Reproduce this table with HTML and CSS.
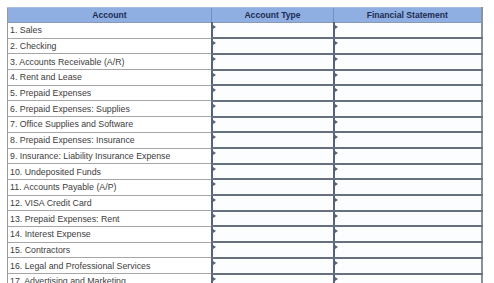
FILE: index.html
```html
<!DOCTYPE html>
<html>
<head>
<meta charset="utf-8">
<link rel="stylesheet" href="styles.css">
</head>
<body>
<table class="sheet">
  <colgroup>
    <col class="c-acc">
    <col class="c-type">
    <col class="c-fs">
  </colgroup>
  <thead>
    <tr><th>Account</th><th>Account Type</th><th>Financial Statement</th></tr>
  </thead>
  <tbody>
    <tr><td class="acc">1. Sales</td><td class="sel"><span class="box"></span></td><td class="sel"><span class="box"></span></td></tr>
    <tr><td class="acc">2. Checking</td><td class="sel"><span class="box"></span></td><td class="sel"><span class="box"></span></td></tr>
    <tr><td class="acc">3. Accounts Receivable (A/R)</td><td class="sel"><span class="box"></span></td><td class="sel"><span class="box"></span></td></tr>
    <tr><td class="acc">4. Rent and Lease</td><td class="sel"><span class="box"></span></td><td class="sel"><span class="box"></span></td></tr>
    <tr><td class="acc">5. Prepaid Expenses</td><td class="sel"><span class="box"></span></td><td class="sel"><span class="box"></span></td></tr>
    <tr><td class="acc">6. Prepaid Expenses: Supplies</td><td class="sel"><span class="box"></span></td><td class="sel"><span class="box"></span></td></tr>
    <tr><td class="acc">7. Office Supplies and Software</td><td class="sel"><span class="box"></span></td><td class="sel"><span class="box"></span></td></tr>
    <tr><td class="acc">8. Prepaid Expenses: Insurance</td><td class="sel"><span class="box"></span></td><td class="sel"><span class="box"></span></td></tr>
    <tr><td class="acc">9. Insurance: Liability Insurance Expense</td><td class="sel"><span class="box"></span></td><td class="sel"><span class="box"></span></td></tr>
    <tr><td class="acc">10. Undeposited Funds</td><td class="sel"><span class="box"></span></td><td class="sel"><span class="box"></span></td></tr>
    <tr><td class="acc">11. Accounts Payable (A/P)</td><td class="sel"><span class="box"></span></td><td class="sel"><span class="box"></span></td></tr>
    <tr><td class="acc">12. VISA Credit Card</td><td class="sel"><span class="box"></span></td><td class="sel"><span class="box"></span></td></tr>
    <tr><td class="acc">13. Prepaid Expenses: Rent</td><td class="sel"><span class="box"></span></td><td class="sel"><span class="box"></span></td></tr>
    <tr><td class="acc">14. Interest Expense</td><td class="sel"><span class="box"></span></td><td class="sel"><span class="box"></span></td></tr>
    <tr><td class="acc">15. Contractors</td><td class="sel"><span class="box"></span></td><td class="sel"><span class="box"></span></td></tr>
    <tr><td class="acc">16. Legal and Professional Services</td><td class="sel"><span class="box"></span></td><td class="sel"><span class="box"></span></td></tr>
    <tr><td class="acc">17. Advertising and Marketing</td><td class="sel"><span class="box"></span></td><td class="sel"><span class="box"></span></td></tr>
  </tbody>
</table>
</body>
</html>
```

FILE: styles.css
```css
html, body {
  margin: 0;
  padding: 0;
  background: #ffffff;
  overflow: hidden;
}
body {
  padding: 7px 0 0 7px;
  font-family: "Liberation Sans", Arial, sans-serif;
}
.sheet {
  border-collapse: collapse;
  table-layout: fixed;
  width: 474px;
  border-right: 2px solid #8a929c;
  border-left: 1px solid #9a9a9a;
}
.c-acc { width: 204px; }
.c-type { width: 122px; }
.c-fs { width: 148px; }
.sheet th {
  background: #8fafe2;
  color: #1d2c52;
  font-size: 8.6px;
  font-weight: bold;
  height: 15px;
  padding: 0;
  text-align: center;
  border-left: 1px solid #7590bb;
  border-top: 1px solid #a9bde0;
  border-bottom: 1px solid #8a9ab4;
  box-sizing: border-box;
}
.sheet th:first-child { border-left: none; }
.sheet td {
  height: 15.7px;
  padding: 0;
  box-sizing: border-box;
}
.acc {
  font-size: 8.8px;
  color: #3c3c3c;
  padding-left: 2px !important;
  white-space: nowrap;
  overflow: hidden;
  border-bottom: 1px solid #a6a6a6;
  line-height: 14px;
}
.sel {
  position: relative;
  border-left: 2px solid #56637a;
  border-bottom: 2px solid #66707e;
  background: #fbfdff;
}
.box {
  position: absolute;
  left: 0;
  top: 2px;
  width: 0;
  height: 0;
  border-top: 2px solid transparent;
  border-bottom: 2px solid transparent;
  border-left: 3px solid #56637a;
}
```
